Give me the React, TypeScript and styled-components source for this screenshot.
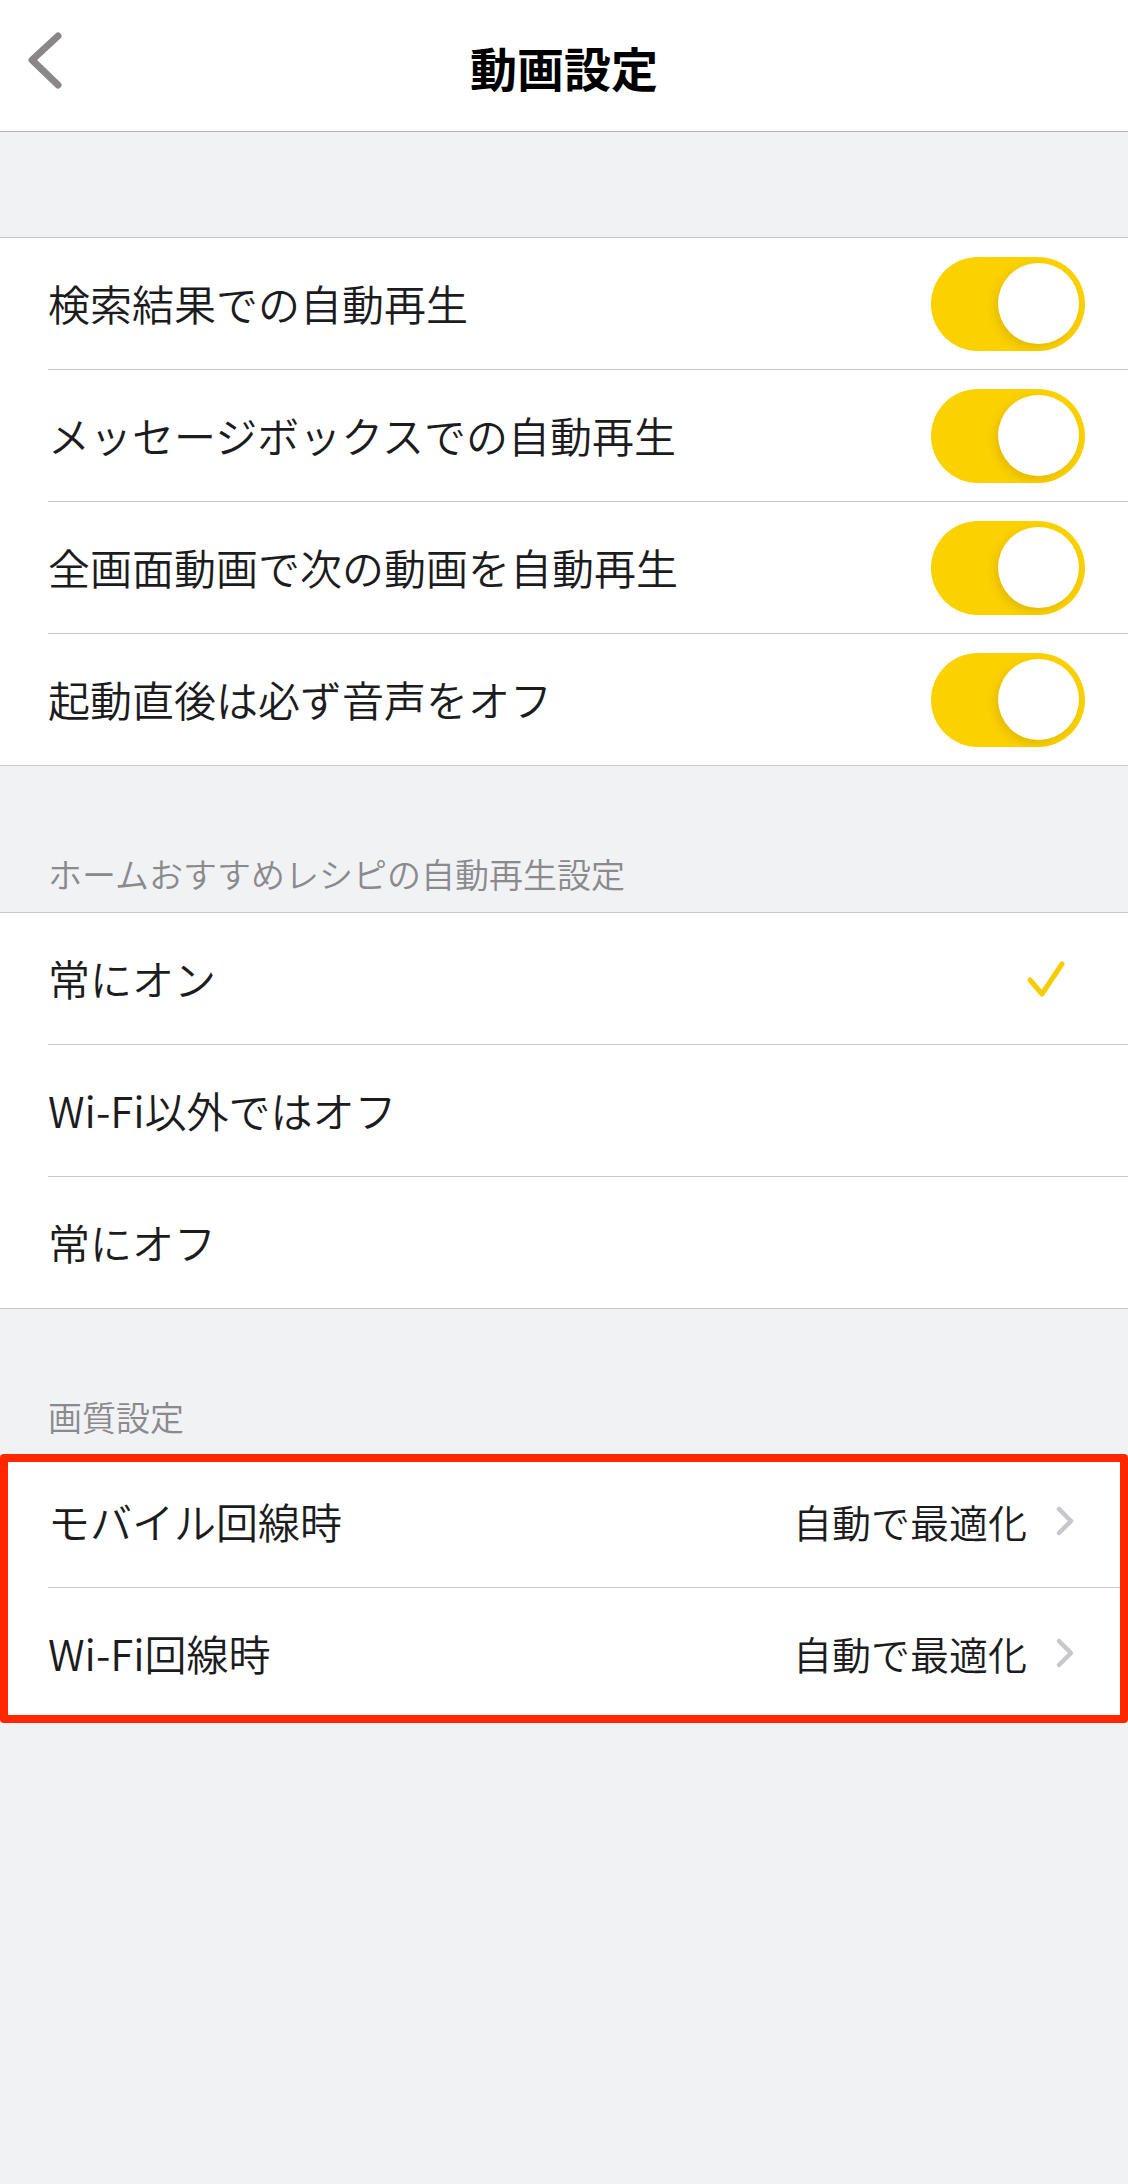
import styled, { createGlobalStyle } from "styled-components";

const GlobalStyle = createGlobalStyle`
  html, body {
    margin: 0;
    padding: 0;
    background: #f1f2f4;
  }
  body {
    font-family: "Noto Sans CJK JP", "Noto Sans", sans-serif;
    -webkit-font-smoothing: antialiased;
  }
`;

const toggleRows = [
  "検索結果での自動再生",
  "メッセージボックスでの自動再生",
  "全画面動画で次の動画を自動再生",
  "起動直後は必ず音声をオフ",
];

const autoplayOptions = [
  { label: "常にオン", checked: true },
  { label: "Wi-Fi以外ではオフ", checked: false },
  { label: "常にオフ", checked: false },
];

const qualityRows = [
  { label: "モバイル回線時", value: "自動で最適化" },
  { label: "Wi-Fi回線時", value: "自動で最適化" },
];

function BackIcon() {
  return (
    <svg width="70" height="70" viewBox="0 0 70 70">
      <polyline
        points="52,6 26,30 52,55"
        fill="none"
        stroke="#8b8788"
        strokeWidth="7"
        strokeLinecap="round"
        strokeLinejoin="round"
      />
    </svg>
  );
}

function CheckIcon() {
  return (
    <svg width="46" height="46" viewBox="0 0 46 46">
      <polyline
        points="6,24 18,38 38,8"
        fill="none"
        stroke="#f7cd00"
        strokeWidth="5"
        strokeLinecap="round"
        strokeLinejoin="round"
      />
    </svg>
  );
}

function ChevronIcon() {
  return (
    <svg width="20" height="36" viewBox="0 0 20 36">
      <polyline
        points="4,6 16,18 4,30"
        fill="none"
        stroke="#c7c7cc"
        strokeWidth="4.5"
        strokeLinecap="round"
        strokeLinejoin="round"
      />
    </svg>
  );
}

export default function App() {
  return (
    <Page>
      <GlobalStyle />
      <NavBar>
        <BackButton>
          <BackIcon />
        </BackButton>
        <NavTitle>動画設定</NavTitle>
      </NavBar>

      <Spacer $h={105} />
      <Group>
        {toggleRows.map((label, i) => (
          <Cell key={label}>
            <CellBody $last={i === toggleRows.length - 1}>
              <Label>{label}</Label>
              <Toggle $on>
                <Knob />
              </Toggle>
            </CellBody>
          </Cell>
        ))}
      </Group>

      <SectionHeader>ホームおすすめレシピの自動再生設定</SectionHeader>
      <Group>
        {autoplayOptions.map((opt, i) => (
          <Cell key={opt.label}>
            <CellBody $last={i === autoplayOptions.length - 1}>
              <Label>{opt.label}</Label>
              {opt.checked && (
                <CheckWrap>
                  <CheckIcon />
                </CheckWrap>
              )}
            </CellBody>
          </Cell>
        ))}
      </Group>

      <SectionHeader>画質設定</SectionHeader>
      <Highlight>
        <Group>
          {qualityRows.map((row, i) => (
            <Cell key={row.label}>
              <CellBody $last={i === qualityRows.length - 1}>
                <Label>{row.label}</Label>
                <Detail>
                  <Value>{row.value}</Value>
                  <ChevronWrap>
                    <ChevronIcon />
                  </ChevronWrap>
                </Detail>
              </CellBody>
            </Cell>
          ))}
        </Group>
      </Highlight>
    </Page>
  );
}

const Page = styled.div`
  width: 1128px;
  min-height: 2184px;
  background: #f1f2f4;
  color: #1c1c1e;
`;

const NavBar = styled.header`
  height: 131px;
  background: #ffffff;
  border-bottom: 1px solid #b4b4b6;
  display: flex;
  align-items: center;
  justify-content: center;
  position: relative;
`;

const BackButton = styled.div`
  position: absolute;
  left: 6px;
  top: 30px;
  width: 70px;
  height: 70px;
`;

const NavTitle = styled.h1`
  margin: 0;
  font-size: 47px;
  font-weight: 700;
  color: #000;
  letter-spacing: 0;
  line-height: 1;
  padding-top: 2px;
`;

const Spacer = styled.div<{ $h: number }>`
  height: ${({ $h }) => $h}px;
`;

const Group = styled.section`
  background: #ffffff;
  border-top: 1px solid #c8c7cc;
  border-bottom: 1px solid #c8c7cc;
`;

const Cell = styled.div`
  padding-left: 48px;
`;

const CellBody = styled.div<{ $last?: boolean }>`
  height: 131px;
  display: flex;
  align-items: center;
  justify-content: space-between;
  padding-right: 43px;
  border-bottom: ${({ $last }) => ($last ? "none" : "1px solid #c8c7cc")};
`;

const Label = styled.span`
  font-size: 42px;
  font-weight: 350;
  line-height: 1.2;
  color: #1c1c1e;
`;

const Toggle = styled.div<{ $on?: boolean }>`
  width: 154px;
  height: 94px;
  border-radius: 47px;
  background: ${({ $on }) => ($on ? "#fbd100" : "#e9e9eb")};
  display: flex;
  align-items: center;
  justify-content: ${({ $on }) => ($on ? "flex-end" : "flex-start")};
  padding: 0 6px;
  box-sizing: border-box;
`;

const Knob = styled.div`
  width: 81px;
  height: 81px;
  border-radius: 50%;
  background: #ffffff;
  box-shadow: -3px 4px 8px rgba(150, 110, 0, 0.22);
`;

const CheckWrap = styled.div`
  display: flex;
  margin-right: 15px;
`;

const SectionHeader = styled.div`
  height: 146px;
  box-sizing: border-box;
  display: flex;
  align-items: flex-end;
  padding: 0 0 18px 48px;
  font-size: 34px;
  font-weight: 350;
  line-height: 40px;
  color: #8a8a8e;
`;

const Highlight = styled.div`
  position: relative;
  &::after {
    content: "";
    position: absolute;
    left: 0;
    right: 0;
    top: -1px;
    bottom: -3px;
    border: 8px solid #ff2600;
    border-radius: 4px;
    pointer-events: none;
  }
`;

const Detail = styled.div`
  display: flex;
  align-items: center;
  gap: 28px;
`;

const Value = styled.span`
  font-size: 39px;
  font-weight: 350;
  line-height: 1.2;
  color: #1c1c1e;
`;

const ChevronWrap = styled.div`
  display: flex;
  margin-right: 10px;
`;
